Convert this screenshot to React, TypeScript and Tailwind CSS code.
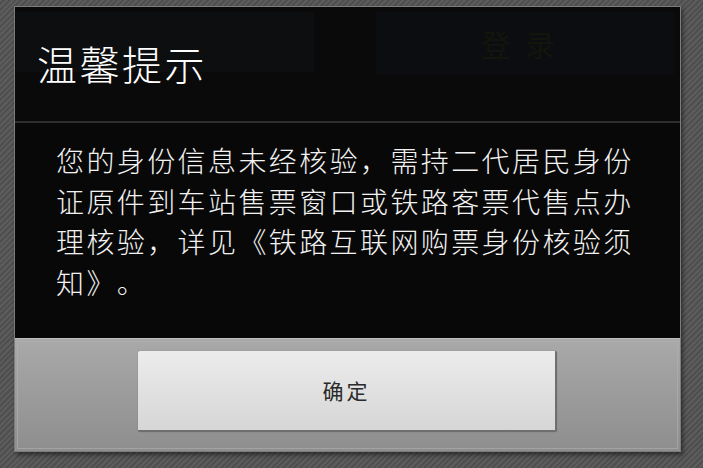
const CJK = "font-['Noto_Sans_CJK_SC','Noto_Sans_CJK_JP',sans-serif]";

const MESSAGE =
    "您的身份信息未经核验，需持二代居民身份证原件到车站售票窗口或铁路客票代售点办理核验，详见《铁路互联网购票身份核验须知》。";

export default function App() {
    return (
        <div className="w-[703px] h-[468px] overflow-hidden pt-[6px] pl-[14px] bg-[repeating-linear-gradient(135deg,#5c5c5c_0px,#5c5c5c_2px,#4f4f4f_2px,#4f4f4f_4px)]">
            <div className={`w-[667px] h-[446px] flex flex-col border border-[#7c7c7c] shadow-[2px_3px_4px_rgba(0,0,0,0.45)] ${CJK}`}>
                {/* title, with the dim buttons of the screen underneath showing through */}
                <div className="grid h-[114px] bg-[#0a0a0a]">
                    <div className="col-start-1 row-start-1 flex gap-[62px] pt-[5px] pl-[1px] pr-[4px]">
                        <div className="w-[298px] h-[60px] bg-[#0d0e10]" />
                        <div className="w-[298px] h-[62px] bg-[#0c0d10] flex items-center justify-center text-[30px] text-[#12150c] tracking-[14px]">
                            登录
                        </div>
                    </div>
                    <div className="col-start-1 row-start-1 pl-[22px] pt-[32px] text-[40px] leading-[48px] font-light tracking-[2.5px] text-white">
                        温馨提示
                    </div>
                </div>

                <div className="h-[2px] bg-[#2e2e2e]" />

                <div className="h-[215px] bg-[#080808] pl-[41px] pt-[17px]">
                    <p className="w-[592px] text-[28px] leading-[40.5px] font-light tracking-[2.4px] text-[#f2f2f2] [text-spacing-trim:space-all]">
                        {MESSAGE}
                    </p>
                </div>

                <div className="flex-1 border-t border-[#bdbdbd] bg-linear-to-b from-[#a9a9a9] to-[#8e8e8e] p-[2px]">
                    <div className="h-full border border-[#b0b0b0]/60 flex justify-center pt-[9px]">
                        <button className="w-[419px] h-[81px] rounded-[2px] border-r-2 border-b-2 border-[#6f6f6f] bg-linear-to-b from-[#ececec] to-[#d6d6d6] shadow-[0_0_1px_rgba(0,0,0,0.4)] text-[21px] tracking-[3px] text-[#2a2a2a]">
                            确定
                        </button>
                    </div>
                </div>
            </div>
        </div>
    );
}
